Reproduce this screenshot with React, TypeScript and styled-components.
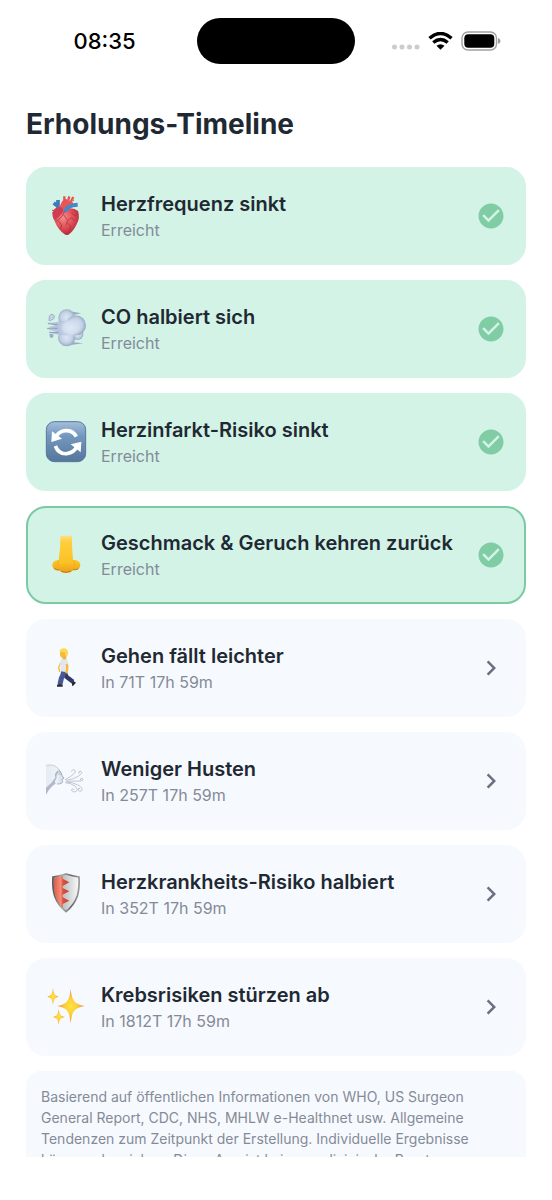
import React from "react";
import styled, { createGlobalStyle } from "styled-components";

const GlobalStyle = createGlobalStyle`
  * { box-sizing: border-box; }
  body {
    margin: 0;
    background: #ffffff;
    color: #1f2933;
    font-family: Inter, "Liberation Sans", sans-serif;
  }
`;

const Screen = styled.div`
  display: flex;
  flex-direction: column;
  height: 100vh;
  padding-bottom: 43px;
`;

const StatusBar = styled.header`
  display: grid;
  grid-template-columns: 1fr auto 1fr;
  align-items: center;
  flex: none;
  padding: 18px 0 0;
`;

const Clock = styled.time`
  justify-self: center;
  padding-left: 12px;
  color: #000000;
  font-size: 22px;
  line-height: 28px;
  font-weight: 500;
`;

const Island = styled.div`
  width: 158px;
  height: 46px;
  border-radius: 23px;
  background: #000000;
`;

const Indicators = styled.div`
  display: flex;
  justify-self: center;
  align-items: center;
  gap: 8px;
  padding-right: 15px;
`;

const Scroller = styled.main`
  flex: 1;
  min-height: 0;
  overflow: hidden;
  padding: 40px 26px 0;
`;

const Title = styled.h1`
  margin: 0;
  font-size: 28px;
  line-height: 40px;
  font-weight: 700;
`;

const List = styled.ul`
  display: flex;
  flex-direction: column;
  gap: 15px;
  margin: 23px 0 15px;
  padding: 0;
  list-style: none;
`;

const Card = styled.button<{ $done: boolean; $current: boolean }>`
  display: flex;
  align-items: center;
  gap: 15px;
  width: 100%;
  min-height: 98px;
  padding: 18px;
  border: 2px solid
    ${(p) => (p.$current ? "#7bcaa2" : p.$done ? "#d3f3e6" : "#f6fafe")};
  border-radius: 20px;
  background: ${(p) => (p.$done ? "#d3f3e6" : "#f6fafe")};
  color: inherit;
  font-family: inherit;
  text-align: left;
  cursor: pointer;
`;

const CardText = styled.span`
  display: flex;
  flex: 1;
  min-width: 0;
  flex-direction: column;
  gap: 1px;
  padding-top: 1px;
`;

const CardTitle = styled.span`
  font-size: 20px;
  line-height: 26px;
  font-weight: 600;
`;

const CardStatus = styled.span`
  color: #858a98;
  font-size: 16px;
  line-height: 24px;
`;

const Picture = styled.svg`
  flex: none;
  width: 40px;
  height: 40px;
  overflow: visible;
`;

const TrailingIcon = styled.svg`
  flex: none;
  width: 30px;
  height: 30px;
`;

const Note = styled.p`
  margin: 0;
  padding: 15px;
  border-radius: 15px;
  background: #f6fafe;
  color: #858a98;
  font-size: 14px;
  line-height: 21px;
`;

const Heart = () => (
  <Picture viewBox="0 0 120 120" aria-hidden="true">
    <defs>
      <radialGradient id="heartBody" cx="0.4" cy="0.35" r="0.75">
        <stop offset="0" stopColor="#f88a88" />
        <stop offset="0.55" stopColor="#dc4a52" />
        <stop offset="1" stopColor="#a51e30" />
      </radialGradient>
    </defs>
    <path d="M36 42V12M38 32L23 21" stroke="#3e78bd" strokeWidth="11" fill="none" />
    <path d="M47 30Q50 14 59 13L60 31M55 14L55 1M66 15L70 1M75 16L82 3" stroke="#e65252" strokeWidth="7" fill="none" />
    <path d="M40 46Q39 17 61 14Q80 10 84 28L69 39Z" fill="#e85756" />
    <path d="M18 43H36M18 51H33M78 10L83 14" stroke="#e06164" strokeWidth="4" />
    <path d="M24 43Q37 31 54 40Q81 31 96 45Q103 65 92 85Q81 108 67 116Q60 119 54 113Q37 101 28 80Q15 60 24 43Z" fill="url(#heartBody)" />
    <path d="M57 48Q61 27 95 26" fill="none" stroke="#4688c8" strokeWidth="12" />
    <path d="M22 44Q32 29 48 35Q57 44 43 58Q31 70 27 72Q15 60 22 44Z" fill="#cf3c54" />
    <path d="M56 46Q52 61 31 76M53 57L65 73L60 88M65 73L77 65L86 75M64 80L74 91L71 103M36 73L47 87L44 98M76 49L84 58L92 57" fill="none" stroke="#9e2942" strokeWidth="2" />
  </Picture>
);

const Puff = () => (
  <Picture viewBox="0 0 120 120" aria-hidden="true">
    <defs>
      <radialGradient id="puffBall" cx="0.48" cy="0.48" r="0.55">
        <stop offset="0" stopColor="#dbe7f6" />
        <stop offset="0.6" stopColor="#c3d1e5" />
        <stop offset="1" stopColor="#8fa1bd" />
      </radialGradient>
      <radialGradient id="puffCore">
        <stop offset="0" stopColor="#dce8f6" />
        <stop offset="0.6" stopColor="#d3dfef" />
        <stop offset="1" stopColor="#c6d3e6" stopOpacity="0" />
      </radialGradient>
    </defs>
    <path d="M67 6L106 13L80 18ZM67 98L112 103L74 108Z" fill="#9baac2" />
    <circle cx="95" cy="76" r="17" fill="url(#puffBall)" />
    <circle cx="62" cy="26" r="25" fill="url(#puffBall)" />
    <circle cx="90" cy="49" r="30" fill="url(#puffBall)" />
    <circle cx="62" cy="86" r="26" fill="url(#puffBall)" />
    <path d="M3 40Q23 44 40 37L72 36V78Q34 79 11 71L30 68L2 61L28 60L6 54L27 50Z" fill="#b6c5dc" />
    <ellipse cx="74" cy="56" rx="36" ry="30" fill="url(#puffCore)" />
    <path d="M6 44L35 47M9 70L38 71M3 58L35 58" stroke="#8e9fbb" strokeWidth="3" />
    <path d="M9 35Q8 15 19 16Q30 20 22 30Q17 34 9 35Z" fill="#c3d2e5" stroke="#8a9bb5" strokeWidth="2" />
    <path d="M10 75Q23 72 23 81Q19 90 12 85Z" fill="#9cacc4" />
  </Picture>
);

const Arrows = () => (
  <Picture viewBox="0 0 120 120" aria-hidden="true">
    <defs>
      <linearGradient id="arrowTile" x2="0" y2="1">
        <stop offset="0" stopColor="#a6bed9" />
        <stop offset="0.35" stopColor="#7398bf" />
        <stop offset="1" stopColor="#56769a" />
      </linearGradient>
    </defs>
    <rect x="1" y="-1" width="118" height="120" rx="24" fill="url(#arrowTile)" stroke="#56779f" strokeWidth="3" />
    <path d="M28 46Q41 24 64 26Q82 27 91 44" fill="none" stroke="#fff" strokeWidth="11" />
    <path d="M18 28L16 60L48 50Z" fill="#fff" />
    <path d="M28 72Q38 97 62 95Q85 92 93 73" fill="none" stroke="#fff" strokeWidth="11" />
    <path d="M74 67L106 59L104 91Z" fill="#fff" />
  </Picture>
);

const Nose = () => (
  <Picture viewBox="0 0 120 120" aria-hidden="true">
    <defs>
      <linearGradient id="noseSkin" x2="0" y2="1">
        <stop offset="0" stopColor="#ffe083" />
        <stop offset="0.18" stopColor="#ffce3b" />
        <stop offset="0.72" stopColor="#fbc126" />
        <stop offset="1" stopColor="#e99d16" />
      </linearGradient>
    </defs>
    <path d="M43 2H78Q77 40 81 74Q103 75 103 91Q102 107 82 105Q75 114 60 114Q45 114 40 106Q19 107 19 91Q19 76 38 75Q44 40 43 2Z" fill="url(#noseSkin)" />
    <path d="M25 101Q33 106 41 105M97 101Q89 106 81 104M46 109Q60 116 75 108" fill="none" stroke="#c97a1c" strokeWidth="3" />
    <path d="M38 77Q32 83 36 93M81 77Q89 84 84 93" fill="none" stroke="#edad20" strokeWidth="3" />
  </Picture>
);

const Walker = () => (
  <Picture viewBox="0 0 120 120" aria-hidden="true">
    <path d="M54 64L61 86L81 101" fill="none" stroke="#303969" strokeWidth="13" />
    <path d="M54 64Q52 82 46 91L42 109" fill="none" stroke="#485895" strokeWidth="15" />
    <path d="M33 110Q42 106 50 111V116H33ZM81 98L90 104L80 115Q75 108 81 98Z" fill="#252833" />
    <path d="M44 44L38 58L41 72" fill="none" stroke="#f7bd38" strokeWidth="4" />
    <path d="M46 32Q58 27 65 37Q70 50 64 73L43 70Q46 50 42 43Z" fill="#e3e6ef" />
    <path d="M62 48Q66 58 61 76" fill="none" stroke="#f6bc38" strokeWidth="7" />
    <ellipse cx="53" cy="17" rx="11" ry="13" fill="#f4ba3c" />
    <path d="M41 12Q41 1 54 1Q67 3 66 16Q65 24 59 26L56 13Z" fill="#ffd850" />
    <path d="M50 27L60 26L61 34H51Z" fill="#f0b335" />
  </Picture>
);

const WindFace = () => (
  <Picture viewBox="0 0 120 120" aria-hidden="true">
    <defs>
      <linearGradient id="windSkin">
        <stop offset="0" stopColor="#e6ebf4" />
        <stop offset="0.6" stopColor="#eef2f8" />
        <stop offset="1" stopColor="#cfd5e1" />
      </linearGradient>
    </defs>
    <path d="M0 13Q28 8 38 25Q46 34 48 43L54 52L48 55L50 62Q49 69 33 69Q15 73 0 101Z" fill="url(#windSkin)" />
    <path d="M38 25Q46 34 48 43L54 52L48 55L50 62Q49 69 33 69" fill="none" stroke="#aab4c5" strokeWidth="3" />
    <path d="M0 13Q28 8 38 25" fill="none" stroke="#c9cfdb" strokeWidth="3" />
    <path d="M36 28Q23 38 28 50Q18 66 0 80V101Q10 81 29 67Q23 62 31 53Q30 41 38 33Z" fill="#b0b9c9" />
    <path d="M37 40Q44 37 47 42M38 34Q44 32 46 36" fill="none" stroke="#98a2b5" strokeWidth="2" />
    <g fill="none" stroke="#c0c6d3" strokeWidth="3" strokeLinecap="round">
      <path d="M58 56Q76 46 82 40Q92 32 86 27Q78 23 77 31" />
      <path d="M62 58Q84 55 98 45Q112 36 105 31Q97 29 98 37" />
      <path d="M61 61Q85 60 105 60Q115 58 109 52Q102 51 103 57" />
      <path d="M61 63Q81 64 96 72Q112 80 107 89Q101 94 96 87Q94 81 101 82" />
      <path d="M59 65Q74 66 87 75Q98 86 90 92Q80 96 76 87Q77 81 84 85" />
    </g>
  </Picture>
);

const Shield = () => (
  <Picture viewBox="0 0 120 120" aria-hidden="true">
    <defs>
      <linearGradient id="shieldRim">
        <stop offset="0" stopColor="#555" />
        <stop offset="0.35" stopColor="#aaa" />
        <stop offset="0.7" stopColor="#666" />
        <stop offset="1" stopColor="#999" />
      </linearGradient>
      <linearGradient id="shieldRed">
        <stop offset="0" stopColor="#d85c48" />
        <stop offset="0.45" stopColor="#f98c79" />
        <stop offset="0.6" stopColor="#d9503a" />
        <stop offset="1" stopColor="#bd4935" />
      </linearGradient>
      <linearGradient id="shieldSilver">
        <stop offset="0" stopColor="#9ea2a5" />
        <stop offset="0.5" stopColor="#c8cacd" />
        <stop offset="1" stopColor="#fafafa" />
      </linearGradient>
    </defs>
    <path d="M21 9Q40 6 60 0Q80 6 99 9Q101 43 94 66Q84 94 60 113Q36 94 26 66Q19 43 21 9Z" fill="url(#shieldSilver)" stroke="url(#shieldRim)" strokeWidth="5" />
    <path d="M24 12Q43 8 50 6V14L70 25L50 36V42L70 52L50 62V70L70 80L50 90V102Q35 88 28 65Q22 43 24 12Z" fill="url(#shieldRed)" />
  </Picture>
);

const Sparkles = () => (
  <Picture viewBox="0 0 120 120" aria-hidden="true">
    <defs>
      <radialGradient id="sparkle">
        <stop offset="0" stopColor="#ffe23d" />
        <stop offset="0.45" stopColor="#fdcf3c" />
        <stop offset="1" stopColor="#ec8b37" />
      </radialGradient>
    </defs>
    <path d="M74 6C78 40 84 51 116 57C84 63 78 73 74 110C70 73 65 63 34 57C65 51 70 40 74 6Z" fill="url(#sparkle)" />
    <path d="M21 4C23 20 26 26 38 29C26 32 23 37 21 54C19 37 16 32 4 29C16 26 19 20 21 4Z" fill="url(#sparkle)" />
    <path d="M38 66C40 82 43 87 56 90C43 93 40 98 38 113C36 98 33 93 21 90C33 87 36 82 38 66Z" fill="url(#sparkle)" />
  </Picture>
);

const CheckIcon = () => (
  <TrailingIcon viewBox="0 0 24 24" fill="#80cca5" aria-hidden="true">
    <path d="M12 2C6.48 2 2 6.48 2 12s4.48 10 10 10 10-4.48 10-10S17.520 2 12 2zm-2 15l-5-5 1.410-1.410L10 14.170l7.590-7.590L19 8l-9 9z" />
  </TrailingIcon>
);

const ChevronIcon = () => (
  <TrailingIcon viewBox="0 0 24 24" fill="#6b7080" aria-hidden="true">
    <path d="M10 6L8.590 7.410 13.170 12l-4.580 4.590L10 18l6-6z" />
  </TrailingIcon>
);

type Milestone = {
  title: string;
  status: string;
  picture: React.ComponentType;
  done?: boolean;
  current?: boolean;
};

const milestones: Milestone[] = [
  { title: "Herzfrequenz sinkt", status: "Erreicht", picture: Heart, done: true },
  { title: "CO halbiert sich", status: "Erreicht", picture: Puff, done: true },
  { title: "Herzinfarkt-Risiko sinkt", status: "Erreicht", picture: Arrows, done: true },
  { title: "Geschmack & Geruch kehren zurück", status: "Erreicht", picture: Nose, done: true, current: true },
  { title: "Gehen fällt leichter", status: "In 71T 17h 59m", picture: Walker },
  { title: "Weniger Husten", status: "In 257T 17h 59m", picture: WindFace },
  { title: "Herzkrankheits-Risiko halbiert", status: "In 352T 17h 59m", picture: Shield },
  { title: "Krebsrisiken stürzen ab", status: "In 1812T 17h 59m", picture: Sparkles },
];

export default function App() {
  return (
    <Screen>
      <GlobalStyle />
      <StatusBar>
        <Clock>08:35</Clock>
        <Island />
        <Indicators>
          <svg width="28" height="18" viewBox="0 0 28 18" fill="#cccccc" aria-hidden="true">
            <circle cx="2.500" cy="15" r="2.500" />
            <circle cx="10" cy="15" r="2.500" />
            <circle cx="17.500" cy="15" r="2.500" />
            <circle cx="25" cy="15" r="2.500" />
          </svg>
          <svg width="25" height="18" viewBox="0 0 25 18" aria-hidden="true">
            <path d="M1.500 6.300Q12.500 -3.300 23.500 6.300" fill="none" stroke="#000" strokeWidth="3.500" />
            <path d="M5.300 10.500Q12.500 4.500 19.700 10.500" fill="none" stroke="#000" strokeWidth="3.500" />
            <path d="M8.500 13.800Q12.500 10.800 16.500 13.800L12.500 17.800Z" />
          </svg>
          <svg width="40" height="20" viewBox="0 0 40 20" aria-hidden="true">
            <rect x="1" y="1" width="34.500" height="18" rx="6" fill="none" stroke="#a0a0a0" strokeWidth="1.400" />
            <rect x="3.300" y="3.300" width="30" height="13.400" rx="4" />
            <path d="M37 7Q39.500 8 39.500 10T37 13Z" fill="#999" />
          </svg>
        </Indicators>
      </StatusBar>
      <Scroller>
        <Title>Erholungs-Timeline</Title>
        <List>
          {milestones.map(({ title, status, picture: Art, done = false, current = false }) => (
            <li key={title}>
              <Card type="button" $done={done} $current={current}>
                <Art />
                <CardText>
                  <CardTitle>{title}</CardTitle>
                  <CardStatus>{status}</CardStatus>
                </CardText>
                {done ? <CheckIcon /> : <ChevronIcon />}
              </Card>
            </li>
          ))}
        </List>
        <Note>
          Basierend auf öffentlichen Informationen von WHO, US Surgeon General Report, CDC, NHS, MHLW
          e-Healthnet usw. Allgemeine Tendenzen zum Zeitpunkt der Erstellung. Individuelle Ergebnisse
          können abweichen. Diese App ist keine medizinische Beratung.
        </Note>
      </Scroller>
    </Screen>
  );
}
